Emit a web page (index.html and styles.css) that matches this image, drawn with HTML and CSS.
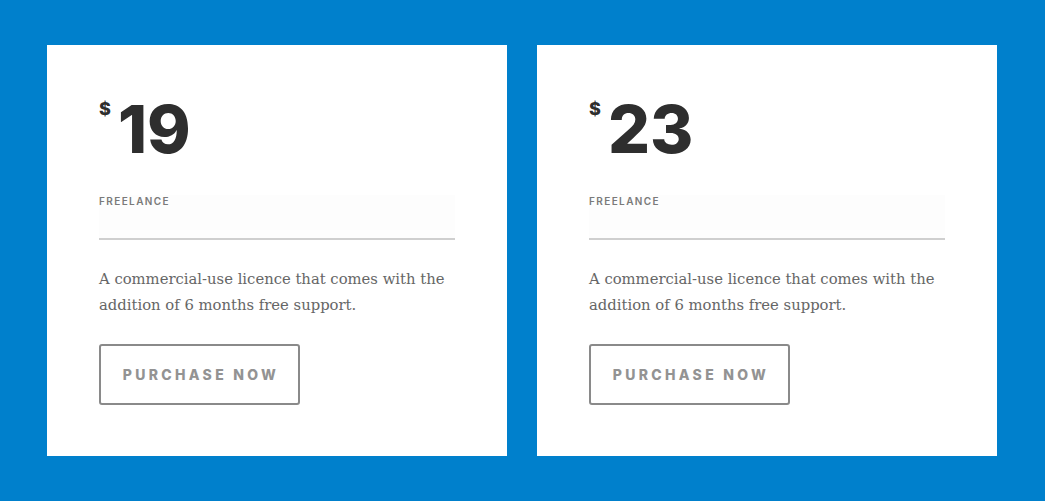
FILE: index.html
```html
<!DOCTYPE html>
<html>
<head>
<meta charset="utf-8">
<link rel="stylesheet" href="styles.css">
</head>
<body>
<div class="pricing">
  <div class="card">
    <div class="price"><span class="currency">$</span><span class="amount">19</span></div>
    <div class="tier"><span>FREELANCE</span></div>
    <p class="desc">A commercial-use licence that comes with the addition of 6 months free support.</p>
    <a class="btn" href="#">PURCHASE NOW</a>
  </div>
  <div class="card">
    <div class="price"><span class="currency">$</span><span class="amount">23</span></div>
    <div class="tier"><span>FREELANCE</span></div>
    <p class="desc">A commercial-use licence that comes with the addition of 6 months free support.</p>
    <a class="btn" href="#">PURCHASE NOW</a>
  </div>
</div>
</body>
</html>
```
FILE: styles.css
```css
html, body {
  margin: 0;
  padding: 0;
  background: #0080cc;
  height: 100%;
}
.pricing {
  display: flex;
  gap: 30px;
  padding: 45px 47px;
}
.card {
  width: 460px;
  height: 411px;
  box-sizing: border-box;
  background: #fff;
  padding: 52px 52px 0 52px;
}
.price {
  display: flex;
  align-items: flex-start;
  color: #2e2e2e;
  font-family: Inter, "DejaVu Sans", sans-serif;
  font-weight: 800;
  height: 78px;
}
.currency {
  font-size: 18px;
  line-height: 18px;
  margin-top: 3px;
  margin-right: 7px;
}
.amount {
  font-size: 66px;
  line-height: 64px;
  letter-spacing: 0;
}
.tier {
  margin-top: 20px;
  height: 43px;
  background: #fdfdfd;
  border-bottom: 2px solid #cfcfcf;
}
.tier span {
  display: block;
  font-family: Inter, "DejaVu Sans", sans-serif;
  font-size: 10px;
  font-weight: 600;
  letter-spacing: 1.4px;
  color: #7a7a7a;
  line-height: 12px;
}
.desc {
  margin: 26px 0 0 0;
  font-family: "DejaVu Serif", serif;
  font-size: 14.8px;
  line-height: 26px;
  color: #666;
}
.btn {
  display: inline-flex;
  align-items: center;
  justify-content: center;
  box-sizing: border-box;
  margin-top: 26px;
  width: 201px;
  height: 61px;
  border: 2px solid #8a8a8a;
  border-radius: 3px;
  text-decoration: none;
  font-family: Inter, "DejaVu Sans", sans-serif;
  font-weight: 800;
  font-size: 14px;
  letter-spacing: 3.3px;
  padding-left: 3px;
  color: #939393;
}
```
